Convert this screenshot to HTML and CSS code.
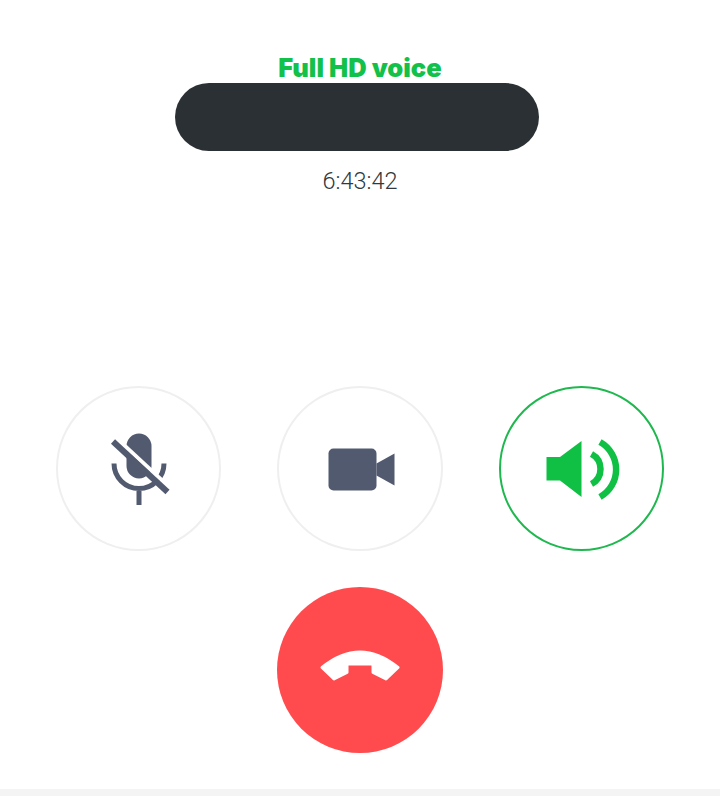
FILE: index.html
```html
<!DOCTYPE html>
<html>
<head>
  <title>Voice call</title>
  <link rel="stylesheet" href="styles.css">
</head>
<body>
  <div class="call-info">
    <div class="quality">Full HD voice</div>
    <div class="name-pill"></div>
    <div class="timer">6:43:42</div>
  </div>

  <div class="controls">
    <button class="ctl" type="button" aria-label="Mute">
      <svg width="72" height="72" viewBox="0 0 72 72">
        <path class="mic-body" d="M23.500 13a12.500 12.500 0 0 1 25 0v20a12.500 12.500 0 0 1-25 0z"/>
        <path class="mic-line" d="M11 30.500a25 25 0 0 0 50 0M36 56v16"/>
        <path class="mic-gap" d="M10 2l54.500 50.500"/>
        <path class="mic-line mic-slash" d="M10 8.500l54.500 50.500"/>
      </svg>
    </button>
    <button class="ctl" type="button" aria-label="Video">
      <svg width="72" height="72" viewBox="0 0 72 72">
        <rect class="cam" x="4.500" y="15.500" width="48" height="42" rx="5"/>
        <path class="cam" d="M52.500 30.500l18-10v32l-18-10z"/>
      </svg>
    </button>
    <button class="ctl ctl-on" type="button" aria-label="Speaker">
      <svg width="80" height="72" viewBox="0 0 80 72">
        <path class="spk" d="M4.500 24H18L39.500 8v56L18 47.500H4.500z"/>
        <path class="spk-wave" d="M49.500 21A17 17 0 0 1 49.500 51"/>
        <path class="spk-wave" d="M58 9A31.500 31.500 0 0 1 58 64"/>
      </svg>
    </button>
  </div>

  <button class="hangup" type="button" aria-label="End call">
    <svg width="88" height="40" viewBox="0 0 88 40">
      <path class="hangup-icon" d="M6 17.500Q44-13.400 82 17.500L70 29 57 22.500V14H31v8.500L18 29z"/>
    </svg>
  </button>

  <div class="bottom-bar"></div>
</body>
</html>
```

FILE: styles.css
```css
body {
  font-family: "Inter", "Liberation Sans", sans-serif;
  margin: 0;
  height: 796px;
  background-color: white;
  display: flex;
  flex-direction: column;
  align-items: center;
  overflow: hidden;
}
.call-info {
  display: flex;
  flex-direction: column;
  align-items: center;
  padding-top: 53px;
}
.quality {
  color: #12c14a;
  font-size: 25.500px;
  font-weight: 900;
  line-height: 30px;
}
.name-pill {
  width: 364px;
  height: 68px;
  border-radius: 34px;
  background-color: #2b3034;
  margin-left: -6px;
}
.timer {
  color: #33383c;
  font-family: "Roboto", sans-serif;
  font-size: 23.500px;
  font-weight: 300;
  line-height: 30px;
  margin-top: 15px;
}
.controls {
  display: flex;
  gap: 56px;
  margin-top: 190px;
}
button {
  padding: 0;
  cursor: pointer;
  display: flex;
  align-items: center;
  justify-content: center;
}
.ctl {
  width: 165.500px;
  height: 165px;
  border: 2px solid #efefef;
  border-radius: 50%;
  background-color: white;
}
.ctl-on {
  border-color: #1fb84f;
}
.hangup {
  width: 166px;
  height: 166px;
  margin-top: 36px;
  border: none;
  border-radius: 50%;
  background-color: #ff4b4e;
}
.bottom-bar {
  width: 100%;
  height: 7px;
  margin-top: auto;
  background-color: #f4f4f4;
}
.mic-body, .cam {
  fill: #525a70;
}
.mic-line {
  fill: none;
  stroke: #525a70;
  stroke-width: 5;
}
.mic-slash {
  stroke-width: 6;
}
.mic-gap {
  fill: none;
  stroke: white;
  stroke-width: 4;
}
.spk {
  fill: #0fc044;
}
.spk-wave {
  fill: none;
  stroke: #0fc044;
  stroke-width: 6.500;
}
.hangup-icon {
  fill: white;
  stroke: white;
  stroke-width: 3;
  stroke-linejoin: round;
}
```
